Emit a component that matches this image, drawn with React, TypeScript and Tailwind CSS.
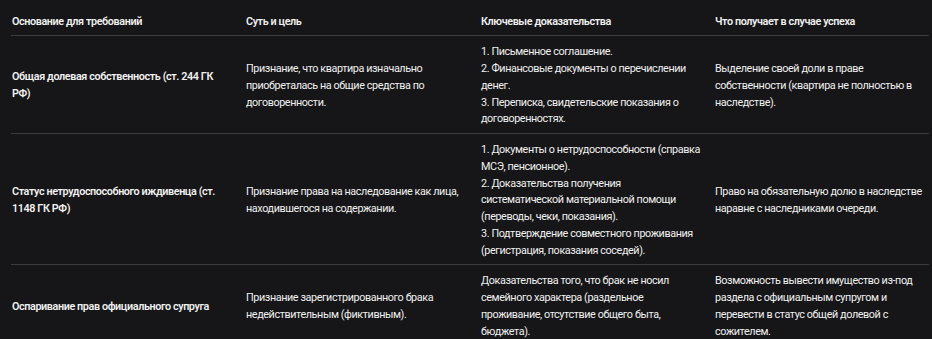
const head = [
  'Основание для требований',
  'Суть и цель',
  'Ключевые доказательства',
  'Что получает в случае успеха',
]

// each cell is a list of lines, broken where the reference breaks them
const rows = [
  [
    ['Общая долевая собственность (ст. 244 ГК', 'РФ)'],
    ['Признание, что квартира изначально', 'приобреталась на общие средства по', 'договоренности.'],
    [
      '1. Письменное соглашение.',
      '2. Финансовые документы о перечислении',
      'денег.',
      '3. Переписка, свидетельские показания о',
      'договоренностях.',
    ],
    ['Выделение своей доли в праве', 'собственности (квартира не полностью в', 'наследстве).'],
  ],
  [
    ['Статус нетрудоспособного иждивенца (ст.', '1148 ГК РФ)'],
    ['Признание права на наследование как лица,', 'находившегося на содержании.'],
    [
      '1. Документы о нетрудоспособности (справка',
      'МСЭ, пенсионное).',
      '2. Доказательства получения',
      'систематической материальной помощи',
      '(переводы, чеки, показания).',
      '3. Подтверждение совместного проживания',
      '(регистрация, показания соседей).',
    ],
    ['Право на обязательную долю в наследстве', 'наравне с наследниками очереди.'],
  ],
  [
    ['Оспаривание прав официального супруга'],
    ['Признание зарегистрированного брака', 'недействительным (фиктивным).'],
    [
      'Доказательства того, что брак не носил',
      'семейного характера (раздельное',
      'проживание, отсутствие общего быта,',
      'бюджета).',
    ],
    [
      'Возможность вывести имущество из-под',
      'раздела с официальным супругом и',
      'перевести в статус общей долевой с',
      'сожителем.',
    ],
  ],
]

const Lines = ({ lines }: { lines: string[] }) => (
  <>
    {lines.map((l, i) => (
      <span key={i}>
        {i > 0 && <br />}
        {l}
      </span>
    ))}
  </>
)

const App = () => {
  return (
    <div
      className="min-h-screen bg-[#161618] pl-[11px] text-[#f0f0f0]"
      style={{ fontFamily: 'Roboto, "Noto Sans", sans-serif' }}
    >
      <table className="w-[918px] table-fixed border-collapse text-left text-[10.8px] leading-[16.8px] tracking-[-0.4px]">
        <colgroup>
          <col className="w-[227px]" />
          <col className="w-[235px]" />
          <col className="w-[234px]" />
          <col className="w-[222px]" />
        </colgroup>
        <thead>
          <tr className="border-b border-[#3d3d40]">
            {head.map((h) => (
              <th
                key={h}
                className="whitespace-nowrap pt-[13.8px] pb-[4.4px] px-2 first:pl-px last:pr-0 font-semibold"
              >
                {h}
              </th>
            ))}
          </tr>
        </thead>
        <tbody>
          {rows.map((row, r) => (
            <tr key={r} className="border-b border-[#3d3d40]">
              {row.map((lines, c) => (
                <td
                  key={c}
                  className={`whitespace-nowrap align-middle pt-[8.3px] pb-[4.5px] px-2 first:pl-px last:pr-0 ${
                    c === 0 ? 'font-semibold' : 'font-normal'
                  }`}
                >
                  <Lines lines={lines} />
                </td>
              ))}
            </tr>
          ))}
        </tbody>
      </table>
    </div>
  )
}

export default App
